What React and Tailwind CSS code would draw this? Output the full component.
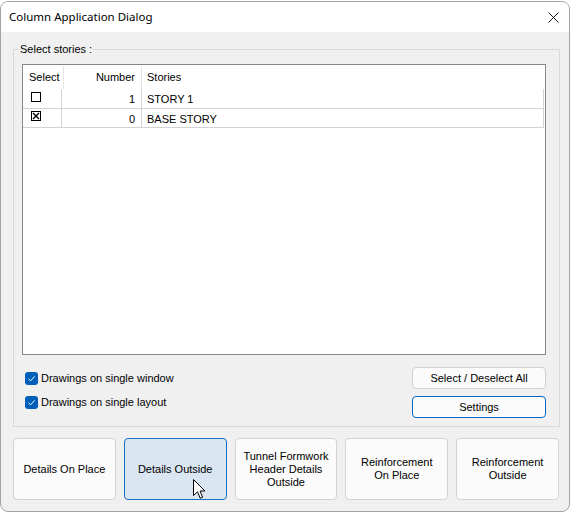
import React from "react";

const font = { fontFamily: '"Liberation Sans", Arial, sans-serif' };
const titleFont = { fontFamily: '"Noto Sans", "Open Sans", sans-serif' };

function Cursor() {
  return (
    <svg width="13" height="21" viewBox="0 0 13 21" className="absolute left-[68px] top-[40px]">
      <path d="M0.5 0.5 L0.5 16.5 L4.5 12.8 L7.2 19.2 L9.6 18.2 L7 12 L12 12 Z" fill="#fff" stroke="#000" strokeWidth="1" strokeLinejoin="miter" />
    </svg>
  );
}

function BigButton({ children, active }) {
  return (
    <div
      className={
        "relative w-[103px] h-[62px] rounded-[4px] border flex items-center justify-center text-center text-[11px] leading-[13px] text-black " +
        (active ? "bg-[#dae6f2] border-[#1b6fc4]" : "bg-[#fbfbfb] border-[#d2d2d2]")
      }
    >
      <span>{children}</span>
      {active && <Cursor />}
    </div>
  );
}

function Check() {
  return (
    <div className="w-[13px] h-[13px] rounded-[3px] bg-[#005fb8] flex items-center justify-center">
      <svg width="9" height="9" viewBox="0 0 9 9">
        <path d="M1.5 4.8 L3.6 6.8 L7.6 2.4" fill="none" stroke="#fff" strokeWidth="1" />
      </svg>
    </div>
  );
}

export default function App() {
  return (
    <div className="w-[571px] h-[513px] bg-white pt-[1px]" style={font}>
      <div className="w-[570px] h-[511px] border border-[#a3a3a3] rounded-[8px] overflow-hidden flex flex-col bg-[#f0f0f0]">
        <div className="h-[30px] bg-white flex items-center justify-between pl-[8px] pr-[10px] shrink-0">
          <span className="text-[11.5px] text-black" style={titleFont}>Column Application Dialog</span>
          <svg width="11" height="11" viewBox="0 0 11 11">
            <path d="M0.5 0.5 L10.5 10.5 M10.5 0.5 L0.5 10.5" stroke="#1a1a1a" strokeWidth="1" />
          </svg>
        </div>
        <div className="flex flex-col pl-[12px] pr-[10px]">
          <fieldset className="mt-[10px] w-[547px] h-[385px] border border-[#d9d9d9] px-0">
            <legend className="ml-[5px] px-[1px] text-[11px] leading-[14px] text-black">Select stories :</legend>
            <div className="pl-[8px] pr-[13px]">
              <div className="mt-[8px] w-[524px] h-[291px] bg-white border border-[#828790] flex flex-col text-[11px] text-black">
                <div className="flex h-[24px] items-center">
                  <div className="w-[41px] pl-[6px] h-[23px] flex items-center border-r border-[#e5e5e5] mt-[1px]">Select</div>
                  <div className="w-[78px] pr-[6px] h-[23px] flex items-center justify-end border-r border-[#e5e5e5] mt-[1px]">Number</div>
                  <div className="pl-[5px]">Stories</div>
                </div>
                <div className="flex h-[20px] border-b border-r border-[#d3d3d3] mr-[1px]">
                  <div className="w-[39px] pl-[8px] pt-[3px] border-r border-[#d3d3d3]">
                    <div className="w-[10px] h-[10px] border border-black bg-white" />
                  </div>
                  <div className="w-[80px] pr-[6px] pt-[2px] flex items-center justify-end border-r border-[#d3d3d3]">1</div>
                  <div className="pl-[5px] pt-[2px] flex items-center">STORY 1</div>
                </div>
                <div className="flex h-[19px] border-b border-r border-[#d3d3d3] mr-[1px]">
                  <div className="w-[39px] pl-[8px] pt-[2px] border-r border-[#d3d3d3]">
                    <svg width="10" height="10" viewBox="0 0 10 10">
                      <rect x="0.5" y="0.5" width="9" height="9" fill="#fff" stroke="#000" />
                      <path d="M2 2 L8 8 M8 2 L2 8" stroke="#000" strokeWidth="1.4" />
                    </svg>
                  </div>
                  <div className="w-[80px] pr-[6px] pt-[2px] flex items-center justify-end border-r border-[#d3d3d3]">0</div>
                  <div className="pl-[5px] pt-[2px] flex items-center">BASE STORY</div>
                </div>
              </div>
              <div className="flex justify-between mt-[12px]">
                <div className="flex flex-col gap-[11px] pt-[5px] pl-[3px]">
                  <div className="flex items-center gap-[3px] text-[11px] text-black h-[13px]">
                    <Check />
                    <span>Drawings on single window</span>
                  </div>
                  <div className="flex items-center gap-[3px] text-[11px] text-black h-[13px]">
                    <Check />
                    <span>Drawings on single layout</span>
                  </div>
                </div>
                <div className="flex flex-col gap-[7px]">
                  <div className="w-[134px] h-[22px] rounded-[4px] border border-[#d0d0d0] bg-[#fbfbfb] flex items-center justify-center text-[11px] text-black">
                    Select / Deselect All
                  </div>
                  <div className="w-[134px] h-[22px] rounded-[4px] border border-[#0067c0] bg-[#fbfbfb] flex items-center justify-center text-[11px] text-black">
                    Settings
                  </div>
                </div>
              </div>
            </div>
          </fieldset>
          <div className="flex mt-[11px] gap-[8px]">
            <BigButton>Details On Place</BigButton>
            <BigButton active>Details Outside</BigButton>
            <BigButton>
              Tunnel Formwork
              <br />
              Header Details
              <br />
              Outside
            </BigButton>
            <BigButton>
              Reinforcement
              <br />
              On Place
            </BigButton>
            <BigButton>
              Reinforcement
              <br />
              Outside
            </BigButton>
          </div>
        </div>
      </div>
    </div>
  );
}
